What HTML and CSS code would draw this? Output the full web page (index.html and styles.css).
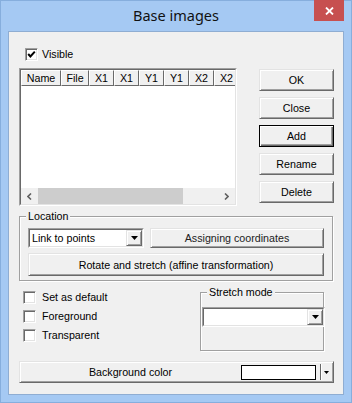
FILE: index.html
```html
<!DOCTYPE html>
<html lang="en">
<head>
  <meta charset="UTF-8" />
  <title>Base images</title>
  <link rel="stylesheet" href="styles.css">
</head>
<body>
  <div class="window">
    <div class="titlebar">
      <span></span>
      <span class="title">Base images</span>
      <div class="close-btn">
        <svg width="9" height="8" viewBox="0 0 9 8"><path d="M1 0.5 L8 7.5 M8 0.5 L1 7.5" stroke="#fff" stroke-width="1.8"/></svg>
      </div>
    </div>

    <div class="client">
      <div class="check visible-check">
        <span class="box">
          <svg width="9" height="9" viewBox="0 0 9 9"><path d="M1.2 4 L3.4 6.4 L7.8 1.6" fill="none" stroke="#000" stroke-width="2"/></svg>
        </span>
        Visible
      </div>

      <div class="main-row">
        <div class="listview">
          <div class="lv-inner">
            <div class="lv-header">
              <div class="hd col-name">Name</div>
              <div class="hd col-file">File</div>
              <div class="hd col-num">X1</div>
              <div class="hd col-num">X1</div>
              <div class="hd col-num">Y1</div>
              <div class="hd col-num">Y1</div>
              <div class="hd col-num">X2</div>
              <div class="hd col-num">X2</div>
            </div>
            <div class="lv-body"></div>
            <div class="hscroll">
              <div class="sb-arrow">
                <svg width="5" height="7" viewBox="0 0 5 7"><path d="M4 0.5 L1 3.5 L4 6.5" fill="none" stroke="#606060" stroke-width="1.6"/></svg>
              </div>
              <div class="sb-thumb"></div>
              <div class="sb-track"></div>
              <div class="sb-arrow">
                <svg width="5" height="7" viewBox="0 0 5 7"><path d="M1 0.5 L4 3.5 L1 6.5" fill="none" stroke="#606060" stroke-width="1.6"/></svg>
              </div>
            </div>
          </div>
        </div>

        <div class="side-buttons">
          <div class="btn">OK</div>
          <div class="btn">Close</div>
          <div class="btn default">Add</div>
          <div class="btn">Rename</div>
          <div class="btn">Delete</div>
        </div>
      </div>

      <fieldset class="group location">
        <legend>Location</legend>
        <div class="loc-row">
          <div class="combo link-combo">
            <div class="combo-in">
              <span class="combo-text">Link to points</span>
              <span class="combo-drop">
                <svg width="7" height="4" viewBox="0 0 7 4"><path d="M0 0 H7 L3.5 4 Z" fill="#000"/></svg>
              </span>
            </div>
          </div>
          <div class="btn assign-btn">Assigning coordinates</div>
        </div>
        <div class="btn rotate-btn">Rotate and stretch (affine transformation)</div>
      </fieldset>

      <div class="bottom-row">
        <div class="checks">
          <div class="check"><span class="box"></span>Set as default</div>
          <div class="check"><span class="box"></span>Foreground</div>
          <div class="check"><span class="box"></span>Transparent</div>
        </div>
        <fieldset class="group stretch">
          <legend>Stretch mode</legend>
          <div class="combo stretch-combo">
            <div class="combo-in">
              <span class="combo-text"></span>
              <span class="combo-drop">
                <svg width="7" height="4" viewBox="0 0 7 4"><path d="M0 0 H7 L3.5 4 Z" fill="#000"/></svg>
              </span>
            </div>
          </div>
        </fieldset>
      </div>

      <div class="btn color-btn">
        <span class="color-label">Background color</span>
        <span class="swatch"></span>
        <span class="sep"></span>
        <svg class="color-arrow" width="5" height="3" viewBox="0 0 5 3"><path d="M0 0 H5 L2.5 3 Z" fill="#000"/></svg>
      </div>
    </div>
  </div>
</body>
</html>
```

FILE: styles.css
```css
* {
  box-sizing: border-box;
}

body {
  margin: 0;
  font-family: "Liberation Sans", Arial, sans-serif;
  font-size: 10.7px;
  color: #000;
  background-color: #a5c9f3;
}

.window {
  width: 352px;
  height: 403px;
  background-color: #a5c9f3;
  box-shadow: inset 0 0 0 1px #86aedd;
}

/* Title bar */
.titlebar {
  display: grid;
  grid-template-columns: 1fr auto 1fr;
  height: 31px;
}

.title {
  align-self: center;
  font-family: "Segoe UI", "Noto Sans", sans-serif;
  font-size: 14.5px;
  line-height: 18px;
  padding-bottom: 1px;
  color: #111;
}

.close-btn {
  justify-self: end;
  align-self: start;
  width: 30px;
  height: 21px;
  margin-right: 8px;
  background-color: #c75050;
  display: flex;
  justify-content: center;
  align-items: center;
}

/* Client area */
.client {
  margin: 0 8px;
  height: 364px;
  background-color: #f0f0f0;
  border: 1px solid #8fadd2;
  padding: 0 9px 0 10px;
}

.check {
  display: flex;
  align-items: center;
  height: 13px;
  line-height: 13px;
  gap: 6px;
}

.box {
  width: 13px;
  height: 13px;
  background-color: #fff;
  border: 1px solid;
  border-color: #a0a0a0 #fff #fff #a0a0a0;
  box-shadow: inset 1px 1px 0 #696969, inset -1px -1px 0 #e3e3e3;
  display: flex;
  justify-content: center;
  align-items: center;
  flex-shrink: 0;
}

.visible-check {
  margin-top: 16px;
  margin-left: 6px;
  gap: 4px;
}

.main-row {
  display: flex;
  justify-content: space-between;
  margin-top: 7px;
}

/* List view */
.listview {
  width: 218px;
  height: 138px;
  border: 1px solid;
  border-color: #a0a0a0 #fff #fff #a0a0a0;
}

.lv-inner {
  height: 100%;
  border: 1px solid;
  border-color: #696969 #e3e3e3 #e3e3e3 #696969;
  background-color: #fff;
  display: flex;
  flex-direction: column;
  overflow: hidden;
}

.lv-header {
  display: flex;
  height: 16px;
  flex-shrink: 0;
}

.hd {
  flex-shrink: 0;
  height: 16px;
  line-height: 14px;
  text-align: center;
  background-color: #f0f0f0;
  border: 1px solid;
  border-color: #fff #696969 #696969 #fff;
}

.col-name { width: 40px; }
.col-file { width: 28px; }
.col-num { width: 25px; }

.lv-body {
  flex: 1;
}

.hscroll {
  display: flex;
  height: 16px;
  background-color: #f0f0f0;
}

.sb-arrow {
  width: 17px;
  display: flex;
  justify-content: center;
  align-items: center;
}

.sb-thumb {
  width: 145px;
  background-color: #cdcdcd;
}

.sb-track {
  flex: 1;
}

/* Buttons */
.btn {
  height: 22px;
  background-color: #f0f0f0;
  border: 1px solid;
  border-color: #e3e3e3 #696969 #696969 #e3e3e3;
  box-shadow: inset 1px 1px 0 #fff, inset -1px -1px 0 #a0a0a0;
  display: flex;
  justify-content: center;
  align-items: center;
  white-space: nowrap;
}

.btn.default {
  border-color: #000;
  box-shadow: inset 1px 1px 0 #fff, inset -1px -1px 0 #696969, inset -2px -2px 0 #a0a0a0;
}

.side-buttons {
  width: 75px;
  display: flex;
  flex-direction: column;
  gap: 6px;
  padding-top: 1px;
}

/* Group boxes */
.group {
  margin: 0;
  border: 1px solid #a0a0a0;
  box-shadow: 1px 1px 0 #fff, inset 1px 1px 0 #fff;
}

.group legend {
  line-height: 13px;
  padding: 0 2px;
  background-color: #f0f0f0;
}

.location {
  margin-top: 4px;
  width: 314px;
  padding: 5px 8px 4px;
}

.location legend {
  margin-left: -2px;
}

.loc-row {
  display: flex;
  gap: 6px;
  margin-bottom: 5px;
}

.combo {
  height: 20px;
  border: 1px solid;
  border-color: #a0a0a0 #fff #fff #a0a0a0;
}

.combo-in {
  height: 100%;
  display: flex;
  background-color: #fff;
  border: 1px solid;
  border-color: #696969 #e3e3e3 #e3e3e3 #696969;
}

.combo-text {
  flex: 1;
  padding-left: 2px;
  line-height: 16px;
}

.combo-drop {
  width: 16px;
  background-color: #f0f0f0;
  border: 1px solid;
  border-color: #e3e3e3 #696969 #696969 #e3e3e3;
  box-shadow: inset 1px 1px 0 #fff, inset -1px -1px 0 #a0a0a0;
  display: flex;
  justify-content: center;
  align-items: center;
}

.link-combo {
  width: 116px;
}

.assign-btn {
  flex: 1;
  height: 20px;
  color: #222;
}

.rotate-btn {
  height: 23px;
}

/* Bottom section */
.bottom-row {
  display: flex;
}

.checks {
  width: 181px;
  padding-top: 10px;
  padding-left: 4px;
  display: flex;
  flex-direction: column;
  gap: 6px;
}

.stretch {
  width: 124px;
  margin-top: 5px;
  padding: 8px 0 23px;
}

.stretch legend {
  margin-left: 6px;
}

.stretch-combo {
  margin: 0 -2px 0 1px;
}

/* Background colour picker */
.color-btn {
  margin-top: 10px;
  width: 315px;
  justify-content: flex-start;
  padding-right: 2px;
}

.color-label {
  flex: 1;
  text-align: center;
}

.swatch {
  width: 75px;
  height: 15px;
  background-color: #fff;
  border: 1px solid #000;
}

.sep {
  width: 2px;
  height: 16px;
  margin-left: 4px;
  border-left: 1px solid #696969;
  border-right: 1px solid #fff;
}

.color-arrow {
  margin: 0 2px 0 2px;
}
```
